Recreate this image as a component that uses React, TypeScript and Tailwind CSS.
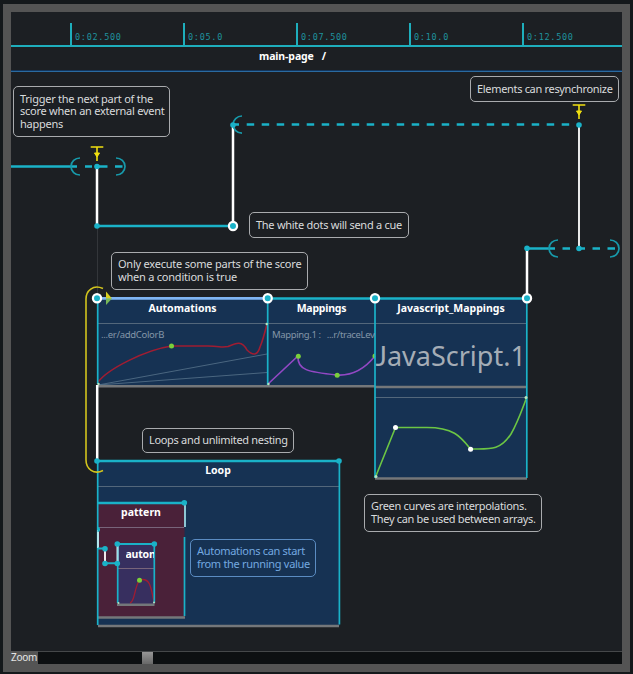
import type { ReactNode } from "react";

const CYAN = "#1ab2c8";
const ticks = ["0:02.500", "0:05.0", "0:07.500", "0:10.0", "0:12.500"];

function Ruler() {
  return (
    <div className="flex h-[35px] shrink-0 items-end overflow-hidden border-b-2 border-[#1eaebc] pl-[59px]">
      {ticks.map((t) => (
        <div
          key={t}
          className="flex h-[22px] w-[113px] shrink-0 items-end border-l-2 border-[#1eaebc] pb-[3px] pl-[3px] font-['DejaVu_Sans_Mono',monospace] text-[8.5px] leading-[10px] tracking-[0.72px] text-[#1f929e]"
        >
          {t}
        </div>
      ))}
    </div>
  );
}

function Note({ className, children }: { className: string; children: ReactNode }) {
  return (
    <div
      className={`absolute flex flex-col justify-center whitespace-nowrap rounded-[5px] border pl-[6px] text-[11px] leading-[12.6px] ${className}`}
    >
      {children}
    </div>
  );
}

function Title({ className, children }: { className: string; children: ReactNode }) {
  return (
    <div className={`absolute whitespace-nowrap text-center text-[10.5px] font-bold leading-[14px] text-white ${className}`}>
      {children}
    </div>
  );
}

function Dot({ x, y, r = 2.8, fill = CYAN }: { x: number; y: number; r?: number; fill?: string }) {
  return <circle cx={x} cy={y} r={r} fill={fill} />;
}

function Cue({ x, y }: { x: number; y: number }) {
  return <circle cx={x} cy={y} r={4.1} fill={CYAN} stroke="#fff" strokeWidth={2.2} />;
}

function Trigger({ x, y }: { x: number; y: number }) {
  return (
    <g stroke="#f0e010" strokeWidth={1.6} fill="#f0e010">
      <path d={`M${x - 6.3} ${y}h12.6M${x} ${y}v14`} />
      <path d={`M${x - 2.5} ${y + 6}h5l-2.5 4z`} strokeWidth={1} />
    </g>
  );
}

function Diagram() {
  return (
    <svg className="absolute inset-0" width="612" height="579" viewBox="11 72 612 579" fill="none">
      <path d="M97.5 228V298" stroke="#33363a" />

      {/* panels */}
      <path d="M97.5 298H527V478H375V386H97.5z" fill="#163253" />
      <rect x="97.5" y="461" width="242" height="165" fill="#163253" />
      <rect x="98" y="503" width="86.5" height="114" fill="#4a2139" />
      <rect x="117.5" y="544" width="37" height="61" fill="#372f5f" />
      <g stroke="#53677b" strokeWidth="1">
        <path d="M98 323.5H527M375 397.5H527M98 486.5H339" />
        <path d="M98 527.5H184M118 568.5H154" stroke="#78647a" />
      </g>

      {/* curves */}
      <g stroke="#58738b" strokeWidth=".8">
        <path d="M98 385L267 354M98 385L267 372.5" />
      </g>
      <g strokeWidth="1.6">
        <path
          d="M98 382C108 369 145 350 171.5 346H208C221 346 220 348 228 346.500C236 343 242 340 247 350C254 357 258 354 260 347C263 340 265 332 267 324"
          stroke="#a01d32"
        />
        <path d="M268 384L298 356C297 370 308 372 337 375C354 376 367 366 375 356" stroke="#9248c4" />
        <path
          d="M375.500 477L395.500 427.500H425C454 427 461 437 470.500 449C490 449 500 451 511 434C518 422 523 407 526.500 398"
          stroke="#6cc644"
        />
        <path d="M130 603C135 602 134 588 139.500 580C150 577 151 587 154 602" stroke="#a01d32" strokeWidth="1.300" />
      </g>
      <path d="M375 353.500a2.500 2.500 0 0 0 0 5z" fill="#7ad03a" />
      <Dot x={171.5} y={346} r={2.5} fill="#7ad03a" />
      <Dot x={298.3} y={356.2} r={2.5} fill="#7ad03a" />
      <Dot x={337.2} y={375.2} r={2.5} fill="#7ad03a" />
      <Dot x={139.5} y={580.2} r={2.5} fill="#7ad03a" />
      <Dot x={395.5} y={427.5} r={2.5} fill="#fff" />
      <Dot x={470.6} y={449.2} r={2.5} fill="#fff" />

      {/* resize handles under each panel */}
      <g stroke="#74777a" strokeWidth="2.4">
        <path d="M98 386.200H375M375 387H527M375 478.500H527M98 626H339M98 617.500H185M117 604.700H154.500" />
      </g>

      {/* panel sides */}
      <g stroke={CYAN} strokeWidth="1.7">
        <path d="M97.700 298V384M267.700 298V385M375 298V478M526.800 298V478M97.700 461V625M339.400 461V624.500M184.500 537V616M117.700 544V603M154.300 544V603" />
      </g>
      <path d="M185 504V527" stroke="#a9edf5" strokeWidth="1.600" />
      <g fill="#b5e6c0">
        <circle cx="98.500" cy="384" r="1.200" />
        <circle cx="268.500" cy="384" r="1.200" />
        <circle cx="266.700" cy="324" r="1.200" />
        <circle cx="376" cy="476.500" r="1.500" />
        <circle cx="526" cy="397.500" r="1.500" />
        <circle cx="118.500" cy="603" r="1" />
        <circle cx="154" cy="602.500" r="1" />
      </g>

      {/* vertical event links */}
      <g stroke="#fff" strokeWidth="2.500">
        <path d="M97 167V226M233 125V226M527 248V298M97.200 385V461" />
        <path d="M579 125V248M105 549V563M117.500 546V562M98 530V548" strokeWidth="1.800" />
      </g>
      <path d="M117.700 546V562M98 530V548" stroke="#7fdbe6" strokeWidth="1" />

      {/* intervals */}
      <g stroke={CYAN} strokeWidth="2.500">
        <path d="M11 166.500H77M85 166.500H92M97 166.500H107.500M115 166.500H122.500" />
        <path d="M97 226H233M233 124.600H239" />
        <path d="M246.700 124.600H570" strokeDasharray="7.500 7.500" />
        <path d="M527 248.500H555M562.500 248.500H570M579 248.500H585M592.500 248.500H600M607.500 248.500H615" />
        <path d="M267 298.500H527M97 461H339M98 503H184.500" />
        <path d="M98 548.500H105M105 563.300H117M117 544H154.500" strokeWidth="2" />
      </g>
      <path d="M97 298.400H267" stroke="#7fb4f2" strokeWidth="2.600" />
      <g stroke="#1799aa" strokeWidth="1.700">
        <path d="M80 158A9 8.500 0 0 0 80 175M116 158A9 8.500 0 0 1 116 175" />
        <path d="M242 116A9 8.600 0 0 0 242 133.200" />
        <path d="M558 240A9 8.500 0 0 0 558 257M610 240A9 8.500 0 0 1 610 257" />
      </g>

      {/* condition bracket */}
      <path d="M103 288.500C93 284 86 291 86 299V460C86 469 94 475 103 470.500" stroke="#d2c41d" strokeWidth="1.600" />
      <path d="M106 291.500L112 298.500H106z" fill="#d9cf20" />
      <path d="M106 298.500H112L106 305z" fill="#78b858" />

      <Trigger x={97} y={147} />
      <Trigger x={579} y={105} />

      <Dot x={97} y={166.5} />
      <Dot x={97} y={226} />
      <Dot x={233} y={125} />
      <Dot x={579} y={125} />
      <Dot x={579} y={248.5} />
      <Dot x={527} y={248.3} />
      <Dot x={97} y={461} />
      <Dot x={339} y={461} />
      <Dot x={184.3} y={502.7} />
      <path d="M97.500 527a2.500 2.500 0 0 1 0 5z" fill={CYAN} />
      <Dot x={105} y={548.7} />
      <Dot x={105} y={563.5} />
      <Dot x={117.3} y={563.5} />
      <Dot x={117.3} y={544} />
      <Dot x={154.3} y={544} />
      <Cue x={233} y={226} />
      <Cue x={97} y={298.3} />
      <Cue x={267.7} y={298.3} />
      <Cue x={375} y={298.3} />
      <Cue x={527} y={298.3} />
    </svg>
  );
}

function Canvas() {
  return (
    <div className="relative h-[579px] shrink-0 overflow-hidden">
      <Diagram />

      <Title className="left-[87px] top-[229px] w-[169px]">Automations</Title>
      <Title className="left-[257px] top-[229px] w-[107px] tracking-[-0.2px]">Mappings</Title>
      <Title className="left-[364px] top-[229px] w-[152px]">Javascript_Mappings</Title>
      <Title className="left-[87px] top-[391px] w-[240px]">Loop</Title>
      <Title className="left-[87px] top-[433px] w-[86px]">pattern</Title>
      <div className="absolute left-[114.5px] top-[475px] w-[28.5px] overflow-hidden whitespace-nowrap text-[10.5px] font-bold leading-[14px] tracking-[-0.2px] text-white">
        autom
      </div>

      <div className="absolute left-[90px] top-[256px] whitespace-nowrap text-[9.5px] leading-[14px] tracking-[-0.3px] text-[#8496a8]">
        ...er/addColorB
      </div>
      <div className="absolute left-[261px] top-[256px] flex w-[103px] gap-[6px] overflow-hidden whitespace-nowrap text-[9.5px] leading-[14px] tracking-[-0.37px] text-[#8496a8]">
        <span>Mapping.1 :</span>
        <span>...r/traceLev</span>
      </div>
      <div className="absolute left-[364.5px] top-[268px] whitespace-nowrap text-[27px] leading-[32px] text-[#a5adb6]">
        <span className="font-['Lato',sans-serif]">J</span>avaScript.1
      </div>

      <Note className="left-[2px] top-[14px] h-[51px] w-[157px] border-[#a9abae] tracking-[-0.25px] text-[#d9dbdd]">
        <span>Trigger the next part of the</span>
        <span>score when an external event</span>
        <span>happens</span>
      </Note>
      <Note className="left-[459px] top-[4px] h-[26px] w-[149px] border-[#a9abae] tracking-[-0.32px] text-[#d9dbdd]">
        <span>Elements can resynchronize</span>
      </Note>
      <Note className="left-[238px] top-[140px] h-[26px] w-[160px] border-[#a9abae] tracking-[-0.27px] text-[#d9dbdd]">
        <span>The white dots will send a cue</span>
      </Note>
      <Note className="left-[100px] top-[180px] h-[38px] w-[197px] border-[#a9abae] pl-[5px] tracking-[-0.22px] text-[#d9dbdd]">
        <span>Only execute some parts of the score</span>
        <span>when a condition is true</span>
      </Note>
      <Note className="left-[131px] top-[356px] h-[25px] w-[152px] border-[#a9abae] tracking-[-0.32px] text-[#d9dbdd]">
        <span>Loops and unlimited nesting</span>
      </Note>
      <Note className="left-[353px] top-[422px] h-[38px] w-[178px] border-[#a9abae] tracking-[-0.32px] text-[#d9dbdd]">
        <span>Green curves are interpolations.</span>
        <span>They can be used between arrays.</span>
      </Note>
      <Note className="left-[179px] top-[467px] h-[38px] w-[126px] border-[#5b8cc2] tracking-[-0.3px] text-[#74a9e0]">
        <span>Automations can start</span>
        <span>from the running value</span>
      </Note>
    </div>
  );
}

export default function App() {
  return (
    <div className="h-[674px] w-[633px] overflow-hidden bg-[#14181b] pl-[3px] pt-[4px] font-['Noto_Sans',sans-serif]">
      <div className="flex h-[668px] w-[627px] flex-col bg-[#545454] px-[8px] pt-[8px]">
        <div className="flex flex-col bg-[#1c1f23]">
          <Ruler />
          <div className="flex h-[23px] shrink-0 items-start gap-[8px] pl-[248px] pt-[2px] text-[10.5px] font-bold leading-[15px] tracking-[-0.1px] text-white">
            <span>main-page</span>
            <span>/</span>
          </div>
          <div className="h-px shrink-0 bg-[#12355c]" />
          <div className="h-px shrink-0 bg-[#2a6aa0]" />
          <Canvas />
        </div>
        <div className="flex h-[13px] shrink-0">
          <span className="w-[27px] shrink-0 whitespace-nowrap text-[10px] leading-[13px] tracking-[-0.3px] text-[#e4e4e4]">Zoom</span>
          <div className="flex grow border-t border-[#45484a] bg-[#0d1012] pl-[104px]">
            <div className="w-[11px] bg-linear-to-b from-[#969696] to-[#686868]" />
          </div>
        </div>
      </div>
    </div>
  );
}
